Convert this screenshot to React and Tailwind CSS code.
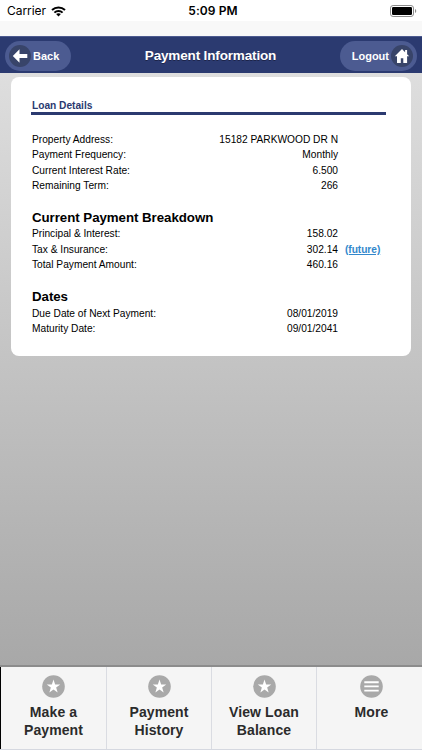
import React from "react";

const loanRows = [
  { label: "Property Address:", value: "15182 PARKWOOD DR N" },
  { label: "Payment Frequency:", value: "Monthly" },
  { label: "Current Interest Rate:", value: "6.500" },
  { label: "Remaining Term:", value: "266" },
];

const paymentRows = [
  { label: "Principal & Interest:", value: "158.02" },
  { label: "Tax & Insurance:", value: "302.14", link: "(future)" },
  { label: "Total Payment Amount:", value: "460.16" },
];

const dateRows = [
  { label: "Due Date of Next Payment:", value: "08/01/2019" },
  { label: "Maturity Date:", value: "09/01/2041" },
];

const StatusBar = () => (
  <div className="grid h-[21px] shrink-0 grid-cols-3 items-center bg-white pt-px pl-[7px] font-['Inter',sans-serif] text-black">
    <div className="flex items-center gap-[5px]">
      <span className="text-[12px] tracking-[-0.05px]">Carrier</span>
      <svg width="15" height="11" viewBox="0 0 15 11" fill="none" stroke="currentColor" strokeWidth="2">
        <path d="M1 4.1C4.7.6 10.3.6 14 4.1" />
        <path d="M3.4 6.6c2.3-2.2 5.9-2.2 8.2 0" />
        <path d="M5.1 8.1c1.4-1.2 3.4-1.2 4.8 0L7.5 10.6z" fill="currentColor" stroke="none" />
      </svg>
    </div>
    <div className="pr-[3px] text-center text-[12px] font-semibold tracking-[0.1px]">5:09 PM</div>
    <div className="flex justify-end pr-[5px]">
      <svg width="27" height="12" viewBox="0 0 27 12">
        <rect x=".5" y=".5" width="23" height="11" rx="2.6" fill="#fff" stroke="#8b8b8b" />
        <rect x="2" y="2" width="20" height="8" rx="1.2" />
        <path d="M25 4v4c1.7-.7 1.7-3.3 0-4z" fill="#8b8b8b" />
      </svg>
    </div>
  </div>
);

const Header = () => (
  <div className="grid h-[37px] shrink-0 grid-cols-[71px_1fr_81px] items-center border-t border-[#4c5a8f] bg-[#2b3a70] pt-px pr-[5px] pl-[5px] font-bold text-white [text-shadow:0_1px_0_#1c2449]">
    <button className="flex h-[30px] w-[66px] items-center gap-[2px] rounded-full bg-[#4c5b91] pl-1 text-[11px]">
      <svg width="22" height="22" viewBox="0 0 22 22">
        <circle cx="11" cy="11" r="11" fill="#384469" />
        <path d="M3.8 11 10.5 4.2V9H18.3v4h-7.8v4.8z" fill="#fff" />
      </svg>
      <span className="pt-px">Back</span>
    </button>
    <h1 className="pt-px pl-[9px] text-center text-[13.5px] tracking-[-0.15px]">Payment Information</h1>
    <button className="flex h-[30px] w-[77px] items-center justify-end gap-[2px] justify-self-end rounded-full bg-[#4c5b91] pr-1 text-[11px]">
      <span className="pt-px">Logout</span>
      <svg width="22" height="22" viewBox="0 0 22 22">
        <circle cx="11" cy="11" r="11" fill="#384469" />
        <path d="M11 4 3.8 11.3H6V18h3.8v-4.8h2.5V18h3.8v-6.7h2.1l-2.1-2.1V5h-2v2.2z" fill="#fff" />
      </svg>
    </button>
  </div>
);

const Rows = ({ rows }) => (
  <dl className="text-[10.2px] leading-[15.33px] text-black">
    {rows.map((row) => (
      <div key={row.label} className="flex">
        <dt className="w-[150px]">{row.label}</dt>
        <dd className="w-[156px] text-right">{row.value}</dd>
        {row.link && (
          <dd className="pl-[7px]">
            <a href="#future" className="font-bold tracking-[-0.05px] text-[#3388cc] underline">
              {row.link}
            </a>
          </dd>
        )}
      </div>
    ))}
  </dl>
);

const StarIcon = () => (
  <svg width="23" height="23" viewBox="0 0 23 23">
    <circle cx="11.5" cy="11.5" r="11.3" fill="#a9a9a9" />
    <path d="m11.5 4.5 1.65 4.9h5.1l-4.1 3.1 1.5 5-4.15-3-4.15 3 1.5-5-4.1-3.1h5.1z" fill="#fff" />
  </svg>
);

const MenuIcon = () => (
  <svg width="23" height="23" viewBox="0 0 23 23">
    <circle cx="11.5" cy="11.5" r="11.3" fill="#a9a9a9" />
    <path d="M4.3 7.2h14.4M4.3 11.4h14.4M4.3 15.6h14.4" stroke="#fff" strokeWidth="1.9" />
  </svg>
);

const TabBar = () => {
  const tab = "flex flex-col items-center pt-2 text-center";
  const text = "mt-[5px] text-[14px] leading-[18px] font-bold tracking-[0.1px] text-[#2b2b2b]";
  return (
    <nav className="grid h-[83px] shrink-0 grid-cols-[107px_105px_105px_105px] border-b border-[#d5d8e0] bg-[#f5f5f5]">
      <a href="#pay" className={`${tab} border-r border-l border-r-[#dadce2] border-l-black`}>
        <StarIcon />
        <span className={text}>Make a<br />Payment</span>
      </a>
      <a href="#history" className={`${tab} border-r border-[#dadce2]`}>
        <StarIcon />
        <span className={text}>Payment<br />History</span>
      </a>
      <a href="#balance" className={`${tab} border-r border-[#dadce2]`}>
        <StarIcon />
        <span className={text}>View Loan<br />Balance</span>
      </a>
      <a href="#more" className={`${tab} pl-[4px]`}>
        <MenuIcon />
        <span className={text}>More</span>
      </a>
    </nav>
  );
};

const App = () => {
  return (
    <div className="flex h-[750px] w-[422px] flex-col overflow-hidden bg-[#f8f8f8] font-['Liberation_Sans',Arial,sans-serif]">
      <StatusBar />
      <div className="h-[15px] shrink-0" />
      <Header />
      <main className="flex-1 border-b-2 border-[#8c8c8c] bg-linear-to-b from-[#dedede] to-[#a8a8a8] px-[11px] pt-1">
        <section className="h-[278.5px] w-[400px] rounded-lg bg-white pt-[23px] pl-[21px]">
          <h2 className="-ml-px w-[355px] border-b-3 border-[#2b3a70] pl-px text-[10.2px] leading-[12px] font-bold tracking-[-0.02px] text-[#2b3a70]">
            Loan Details
          </h2>
          <div className="pt-[17px]">
            <Rows rows={loanRows} />
          </div>
          <h3 className="mt-[15.5px] text-[13.3px] leading-[18px] font-bold tracking-[-0.05px]">Current Payment Breakdown</h3>
          <div className="-mt-[0.5px]">
            <Rows rows={paymentRows} />
          </div>
          <h3 className="mt-4 text-[13.3px] leading-[18px] font-bold tracking-[-0.05px]">Dates</h3>
          <div className="-mt-[0.5px]">
            <Rows rows={dateRows} />
          </div>
        </section>
      </main>
      <TabBar />
    </div>
  );
};

export default App;
